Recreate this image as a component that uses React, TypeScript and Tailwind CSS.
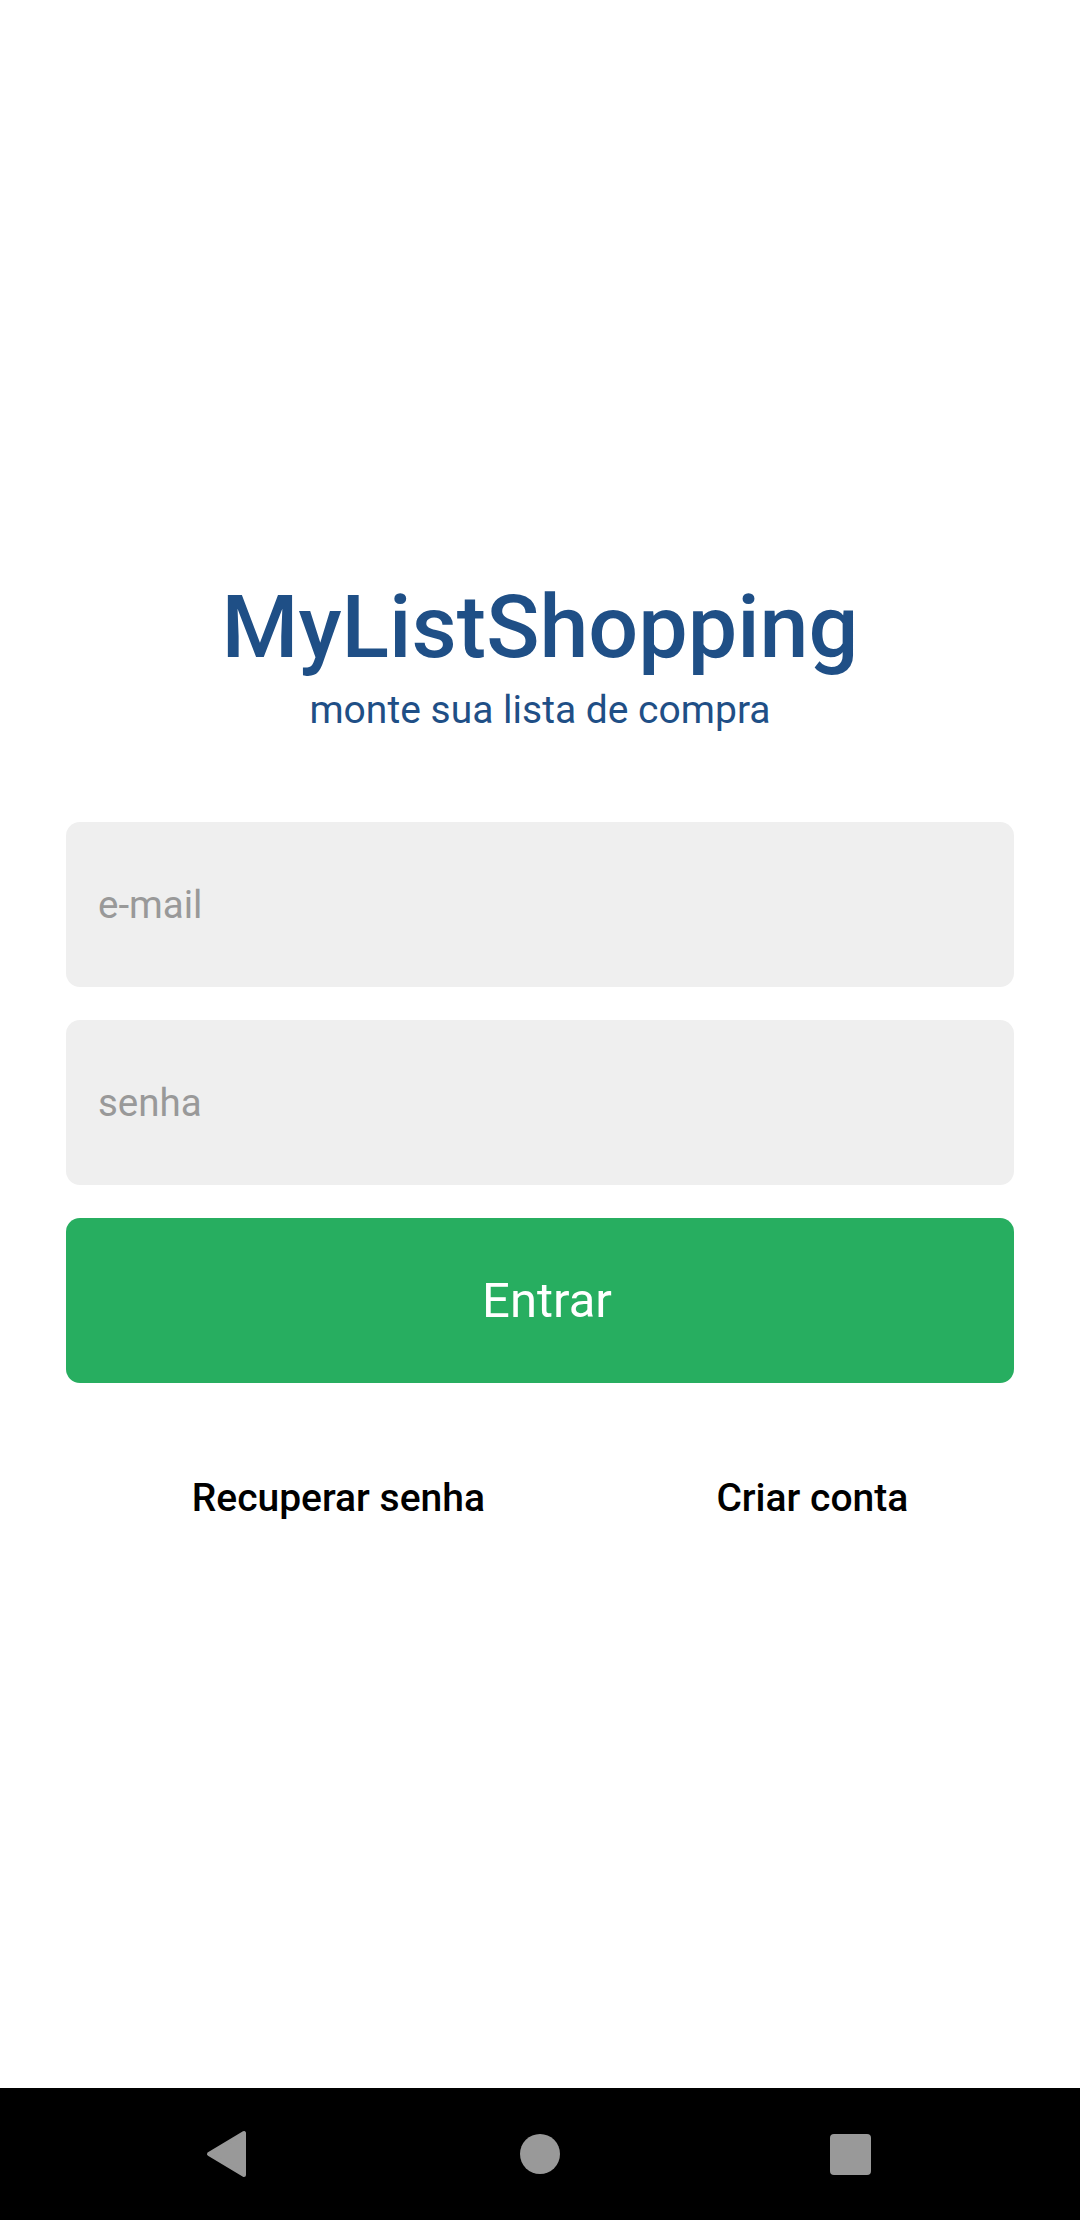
import React from 'react';

const font = { fontFamily: 'Roboto, "Noto Sans", sans-serif' };

function NavBar() {
  return (
    <div className="h-[132px] bg-black flex items-center pl-[205px]">
      <svg width="42" height="48" viewBox="0 0 42 48">
        <path d="M39 3 L39 45 L4 24 Z" fill="#999999" stroke="#999999" strokeWidth="4" strokeLinejoin="round" />
      </svg>
      <div className="ml-[273px] w-[40px] h-[40px] rounded-full bg-[#999999]" />
      <div className="ml-[270px] w-[41px] h-[41px] rounded-[4px] bg-[#999999]" />
    </div>
  );
}

export default function App() {
  return (
    <div className="min-h-screen flex flex-col bg-white" style={font}>
      <div className="flex-1 flex flex-col pt-[575px] px-[66px]">
        {/* Header */}
        <h1 className="text-center text-[88px] leading-[104px] font-medium text-[#1f4f86]">MyListShopping</h1>
        <p className="text-center text-[39px] leading-[46px] mt-[8px] text-[#1f4f86]">monte sua lista de compra</p>

        {/* Form */}
        <div className="mt-[89px] flex flex-col gap-[33px]">
          <input
            type="text"
            placeholder="e-mail"
            className="h-[165px] w-full rounded-[14px] bg-[#efefef] px-[32px] text-[38.5px] text-gray-800 placeholder:text-[#999999] outline-none"
          />
          <input
            type="password"
            placeholder="senha"
            className="h-[165px] w-full rounded-[14px] bg-[#efefef] px-[32px] text-[38.5px] text-gray-800 placeholder:text-[#999999] outline-none"
          />
          <button className="h-[165px] w-full rounded-[14px] bg-[#27ae60] pl-[14px] text-white text-[49px]">
            Entrar
          </button>
        </div>

        {/* Links */}
        <div className="mt-[93px] ml-[10px] mr-[-10px] flex justify-around">
          <button className="text-[39px] leading-[45px] font-medium text-black">Recuperar senha</button>
          <button className="text-[39px] leading-[45px] font-medium text-black">Criar conta</button>
        </div>
      </div>
      <NavBar />
    </div>
  );
}
